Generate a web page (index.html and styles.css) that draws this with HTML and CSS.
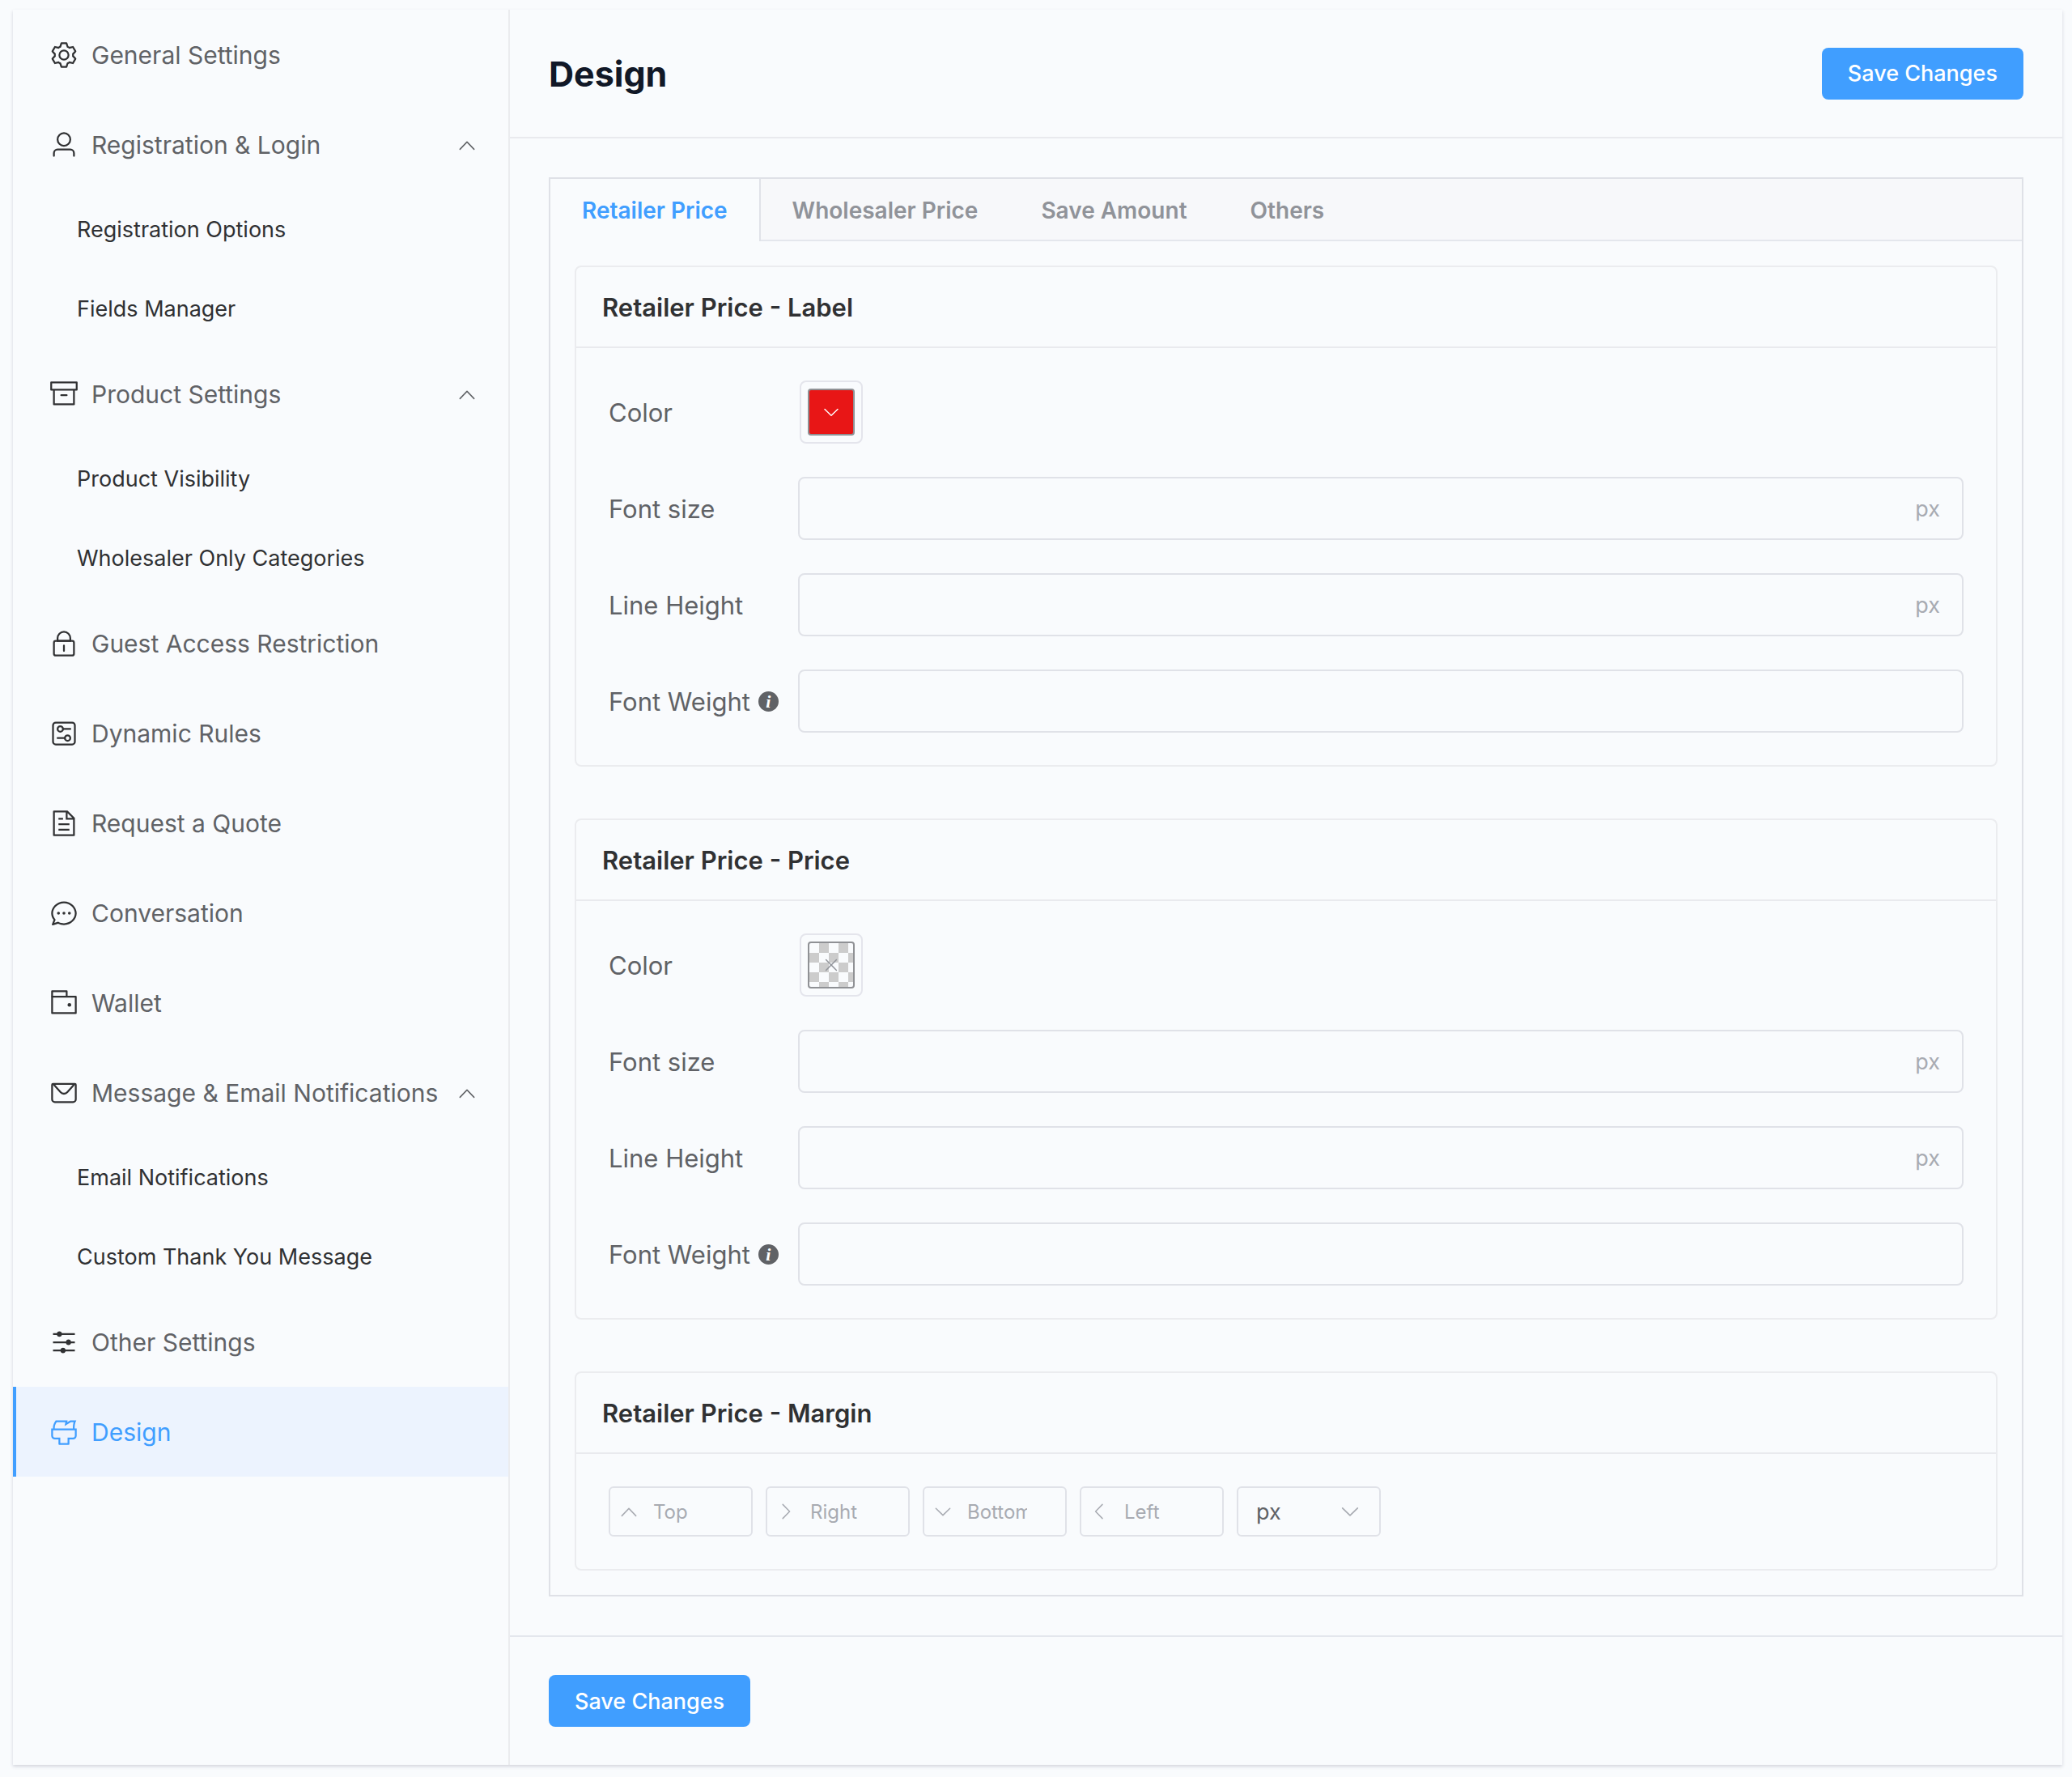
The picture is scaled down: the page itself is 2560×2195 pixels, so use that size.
FILE: index.html
```html
<!DOCTYPE html>
<html lang="en">
<head>
    <meta charset="UTF-8">
    <meta name="viewport" content="width=device-width, initial-scale=1.0">
    <title>Design</title>

    <link rel="stylesheet" href="styles.css">
</head>
<body>

    <!-- shared icons -->
    <svg class="sprite" aria-hidden="true">
        <symbol id="arrow-up" viewBox="0 0 1024 1024"><path d="m488.832 344.32-339.84 356.672a32 32 0 0 0 0 44.16l.384.384a29.44 29.44 0 0 0 42.688 0l320-335.872 319.872 335.872a29.44 29.44 0 0 0 42.688 0l.384-.384a32 32 0 0 0 0-44.16L535.168 344.32a32 32 0 0 0-46.336 0z"/></symbol>
        <symbol id="arrow-down" viewBox="0 0 1024 1024"><path d="M831.872 340.864 512 652.672 192.128 340.864a30.592 30.592 0 0 0-42.752 0 29.12 29.12 0 0 0 0 41.6L489.664 714.24a32 32 0 0 0 44.672 0l340.288-331.712a29.12 29.12 0 0 0 0-41.728 30.592 30.592 0 0 0-42.752 0z"/></symbol>
        <symbol id="arrow-right" viewBox="0 0 1024 1024"><path d="M340.864 149.312a30.592 30.592 0 0 0 0 42.752L652.736 512 340.864 831.872a30.592 30.592 0 0 0 0 42.752 29.12 29.12 0 0 0 41.728 0L714.24 534.336a32 32 0 0 0 0-44.672L382.592 149.376a29.12 29.12 0 0 0-41.728 0z"/></symbol>
        <symbol id="arrow-left" viewBox="0 0 1024 1024"><path d="M609.408 149.376 277.76 489.6a32 32 0 0 0 0 44.672l331.648 340.352a29.12 29.12 0 0 0 41.728 0 30.592 30.592 0 0 0 0-42.752L339.264 511.936l311.872-319.872a30.592 30.592 0 0 0 0-42.688 29.12 29.12 0 0 0-41.728 0z"/></symbol>
        <symbol id="close" viewBox="0 0 1024 1024"><path d="M764.288 214.592 512 466.88 259.712 214.592a31.936 31.936 0 0 0-45.12 45.12L466.752 512 214.528 764.224a31.936 31.936 0 1 0 45.12 45.184L512 557.184l252.288 252.288a31.936 31.936 0 0 0 45.12-45.12L557.12 512.064l252.288-252.352a31.936 31.936 0 1 0-45.12-45.184z"/></symbol>
    </svg>

    <div class="panel">
        <nav class="sidebar">
            <a class="item" href="#general">
                <svg class="icon" viewBox="0 0 1024 1024"><path d="M600.704 64a32 32 0 0 1 30.464 22.208l35.2 109.376c14.784 7.232 28.928 15.36 42.432 24.512l112.384-24.192a32 32 0 0 1 34.432 15.36L944.32 364.8a32 32 0 0 1-4.032 37.504l-77.12 85.12a357.12 357.12 0 0 1 0 49.024l77.12 85.248a32 32 0 0 1 4.032 37.504l-88.704 153.6a32 32 0 0 1-34.432 15.296L708.8 803.904c-13.44 9.088-27.648 17.28-42.368 24.512l-35.264 109.376A32 32 0 0 1 600.704 960H423.296a32 32 0 0 1-30.464-22.208L357.696 828.48a351.616 351.616 0 0 1-42.56-24.64l-112.32 24.256a32 32 0 0 1-34.432-15.36L79.68 659.2a32 32 0 0 1 4.032-37.504l77.12-85.248a357.12 357.12 0 0 1 0-48.896l-77.12-85.248A32 32 0 0 1 79.68 364.8l88.704-153.6a32 32 0 0 1 34.432-15.296l112.32 24.256c13.568-9.152 27.776-17.408 42.56-24.64l35.2-109.312A32 32 0 0 1 423.232 64H600.64zm-23.424 64H446.72l-36.352 113.088-24.512 11.968a294.113 294.113 0 0 0-34.816 20.096l-22.656 15.36-116.224-25.088-65.28 113.152 79.68 88.192-1.92 27.136a293.12 293.12 0 0 0 0 40.192l1.92 27.136-79.808 88.192 65.344 113.152 116.224-25.024 22.656 15.296a294.113 294.113 0 0 0 34.816 20.096l24.512 11.968L446.72 896h130.688l36.48-113.152 24.448-11.904a288.282 288.282 0 0 0 34.752-20.096l22.592-15.296 116.288 25.024 65.28-113.152-79.744-88.192 1.92-27.136a293.12 293.12 0 0 0 0-40.256l-1.92-27.136 79.808-88.128-65.344-113.152-116.288 24.96-22.592-15.232a287.616 287.616 0 0 0-34.752-20.096l-24.448-11.904L577.344 128zM512 320a192 192 0 1 1 0 384 192 192 0 0 1 0-384m0 64a128 128 0 1 0 0 256 128 128 0 0 0 0-256"/></svg>
                <span>General Settings</span>
            </a>
            <button class="item" type="button" aria-expanded="true">
                <svg class="icon" viewBox="0 0 1024 1024"><path d="M512 512a192 192 0 1 0 0-384 192 192 0 0 0 0 384m0 64a256 256 0 1 1 0-512 256 256 0 0 1 0 512m320 320v-96a96 96 0 0 0-96-96H288a96 96 0 0 0-96 96v96a32 32 0 1 1-64 0v-96a160 160 0 0 1 160-160h448a160 160 0 0 1 160 160v96a32 32 0 1 1-64 0"/></svg>
                <span>Registration &amp; Login</span>
                <svg class="arrow"><use href="#arrow-up"/></svg>
            </button>
            <div class="submenu">
                <a href="#registration-options">Registration Options</a>
                <a href="#fields-manager">Fields Manager</a>
            </div>
            <button class="item" type="button" aria-expanded="true">
                <svg class="icon" viewBox="0 0 1024 1024"><path d="M832 384H192v448h640zM96 320h832V128H96zm800 64v480a32 32 0 0 1-32 32H160a32 32 0 0 1-32-32V384H64a32 32 0 0 1-32-32V96a32 32 0 0 1 32-32h896a32 32 0 0 1 32 32v256a32 32 0 0 1-32 32zM416 512h192a32 32 0 0 1 0 64H416a32 32 0 0 1 0-64"/></svg>
                <span>Product Settings</span>
                <svg class="arrow"><use href="#arrow-up"/></svg>
            </button>
            <div class="submenu">
                <a href="#product-visibility">Product Visibility</a>
                <a href="#wholesaler-categories">Wholesaler Only Categories</a>
            </div>
            <a class="item" href="#guest">
                <svg class="icon" viewBox="0 0 1024 1024"><path d="M224 448a32 32 0 0 0-32 32v384a32 32 0 0 0 32 32h576a32 32 0 0 0 32-32V480a32 32 0 0 0-32-32zm0-64h576a96 96 0 0 1 96 96v384a96 96 0 0 1-96 96H224a96 96 0 0 1-96-96V480a96 96 0 0 1 96-96"/><path d="M512 544a32 32 0 0 1 32 32v192a32 32 0 1 1-64 0V576a32 32 0 0 1 32-32m192-160v-64a192 192 0 1 0-384 0v64zM512 64a256 256 0 0 1 256 256v128H256V320A256 256 0 0 1 512 64"/></svg>
                <span>Guest Access Restriction</span>
            </a>
            <a class="item" href="#rules">
                <svg class="icon" viewBox="0 0 1024 1024"><path d="M224 160a64 64 0 0 0-64 64v576a64 64 0 0 0 64 64h576a64 64 0 0 0 64-64V224a64 64 0 0 0-64-64zm0-64h576a128 128 0 0 1 128 128v576a128 128 0 0 1-128 128H224A128 128 0 0 1 96 800V224A128 128 0 0 1 224 96"/><path d="M384 416a64 64 0 1 0 0-128 64 64 0 0 0 0 128m0 64a128 128 0 1 1 0-256 128 128 0 0 1 0 256"/><path d="M480 320h256q32 0 32 32t-32 32H480q-32 0-32-32t32-32m160 416a64 64 0 1 0 0-128 64 64 0 0 0 0 128m0 64a128 128 0 1 1 0-256 128 128 0 0 1 0 256"/><path d="M288 640h256q32 0 32 32t-32 32H288q-32 0-32-32t32-32"/></svg>
                <span>Dynamic Rules</span>
            </a>
            <a class="item" href="#quote">
                <svg class="icon" viewBox="0 0 1024 1024"><path d="M832 384H576V128H192v768h640zm-26.496-64L640 154.496V320zM160 64h480l256 256v608a32 32 0 0 1-32 32H160a32 32 0 0 1-32-32V96a32 32 0 0 1 32-32m160 448h384v64H320zm0-192h160v64H320zm0 384h384v64H320z"/></svg>
                <span>Request a Quote</span>
            </a>
            <a class="item" href="#conversation">
                <svg class="icon" viewBox="0 0 1024 1024"><path d="m174.72 855.68 135.296-45.12 23.68 11.84C388.096 849.536 448.576 864 512 864c211.84 0 384-166.784 384-352S723.84 160 512 160 128 326.784 128 512c0 69.12 24.96 139.264 70.848 199.232l22.08 28.8-46.272 115.584zm-45.248 82.56A32 32 0 0 1 89.6 896l58.368-145.92C94.72 680.32 64 596.864 64 512 64 299.904 256 96 512 96s448 203.904 448 416-192 416-448 416a461.06 461.06 0 0 1-206.912-48.384l-175.616 58.56z"/><path d="M512 563.2a51.2 51.2 0 1 1 0-102.4 51.2 51.2 0 0 1 0 102.4m192 0a51.2 51.2 0 1 1 0-102.4 51.2 51.2 0 0 1 0 102.4m-384 0a51.2 51.2 0 1 1 0-102.4 51.2 51.2 0 0 1 0 102.4"/></svg>
                <span>Conversation</span>
            </a>
            <a class="item" href="#wallet">
                <svg class="icon" viewBox="0 0 1024 1024"><path d="M640 288h-64V128H128v160H64V96a32 32 0 0 1 32-32h512a32 32 0 0 1 32 32z"/><path d="M128 320v512h768V320zm-32-64h832a32 32 0 0 1 32 32v576a32 32 0 0 1-32 32H96a32 32 0 0 1-32-32V288a32 32 0 0 1 32-32"/><path d="M704 640a64 64 0 1 1 0-128 64 64 0 0 1 0 128"/></svg>
                <span>Wallet</span>
            </a>
            <button class="item" type="button" aria-expanded="true">
                <svg class="icon" viewBox="0 0 1024 1024"><path d="M128 224v512a64 64 0 0 0 64 64h640a64 64 0 0 0 64-64V224zm0-64h768a64 64 0 0 1 64 64v512a128 128 0 0 1-128 128H192A128 128 0 0 1 64 736V224a64 64 0 0 1 64-64"/><path d="M904 224 656.512 506.88a192 192 0 0 1-289.024 0L120 224zm-698.944 0 210.56 240.704a128 128 0 0 0 192.704 0L818.944 224z"/></svg>
                <span>Message &amp; Email Notifications</span>
                <svg class="arrow"><use href="#arrow-up"/></svg>
            </button>
            <div class="submenu">
                <a href="#email">Email Notifications</a>
                <a href="#thank-you">Custom Thank You Message</a>
            </div>
            <a class="item" href="#other">
                <svg class="icon" viewBox="0 0 1024 1024"><path d="M389.44 768a96.064 96.064 0 0 1 181.12 0H896v64H570.56a96.064 96.064 0 0 1-181.12 0H128v-64zm192-288a96.064 96.064 0 0 1 181.12 0H896v64H762.56a96.064 96.064 0 0 1-181.12 0H128v-64zm-320-288a96.064 96.064 0 0 1 181.12 0H896v64H442.56a96.064 96.064 0 0 1-181.12 0H128v-64z"/></svg>
                <span>Other Settings</span>
            </a>
            <a class="item active" href="#design" aria-current="page">
                <svg class="icon" viewBox="0 0 1024 1024"><path d="M896 448H128v192a64 64 0 0 0 64 64h192v192h256V704h192a64 64 0 0 0 64-64zm-770.752-64c0-47.552 5.248-90.24 15.552-128 14.72-54.016 42.496-107.392 83.2-160h417.28l-15.36 70.336L736 96h211.2c-24.832 42.88-41.92 96.256-51.2 160a663.872 663.872 0 0 0-6.144 128H960v256a128 128 0 0 1-128 128H704v160a32 32 0 0 1-32 32H352a32 32 0 0 1-32-32V768H192A128 128 0 0 1 64 640V384zm64 0h636.544c-2.048-45.824.256-91.584 6.848-137.216 4.48-30.848 10.688-59.776 18.688-86.784h-96.64l-221.12 141.248L561.92 160H256.512c-25.856 37.888-43.776 75.456-53.952 112.832-8.768 32.064-13.248 69.12-13.312 111.168z"/></svg>
                <span>Design</span>
            </a>
        </nav>

        <main class="content">
            <header class="top">
                <h1>Design</h1>
                <button class="save" type="submit" form="design">Save Changes</button>
            </header>

            <form class="tabs" id="design">
                <div class="tab-bar" role="tablist">
                    <button class="tab active" type="button" role="tab" aria-selected="true">Retailer Price</button>
                    <button class="tab" type="button" role="tab">Wholesaler Price</button>
                    <button class="tab" type="button" role="tab">Save Amount</button>
                    <button class="tab" type="button" role="tab">Others</button>
                </div>

                <div class="tab-body">
                    <section class="card">
                        <h2>Retailer Price - Label</h2>
                        <div class="card-body">
                            <div class="row">
                                <label for="label-color">Color</label>
                                <button class="color" type="button" id="label-color">
                                    <span class="swatch red"><svg><use href="#arrow-down"/></svg></span>
                                </button>
                            </div>
                            <div class="row">
                                <label for="label-size">Font size</label>
                                <div class="field"><input type="text" id="label-size"><span>px</span></div>
                            </div>
                            <div class="row">
                                <label for="label-height">Line Height</label>
                                <div class="field"><input type="text" id="label-height"><span>px</span></div>
                            </div>
                            <div class="row">
                                <label for="label-weight">Font Weight <span class="info">i</span></label>
                                <div class="field"><input type="text" id="label-weight"></div>
                            </div>
                        </div>
                    </section>

                    <section class="card">
                        <h2>Retailer Price - Price</h2>
                        <div class="card-body">
                            <div class="row">
                                <label for="price-color">Color</label>
                                <button class="color" type="button" id="price-color">
                                    <span class="swatch empty"><svg><use href="#close"/></svg></span>
                                </button>
                            </div>
                            <div class="row">
                                <label for="price-size">Font size</label>
                                <div class="field"><input type="text" id="price-size"><span>px</span></div>
                            </div>
                            <div class="row">
                                <label for="price-height">Line Height</label>
                                <div class="field"><input type="text" id="price-height"><span>px</span></div>
                            </div>
                            <div class="row">
                                <label for="price-weight">Font Weight <span class="info">i</span></label>
                                <div class="field"><input type="text" id="price-weight"></div>
                            </div>
                        </div>
                    </section>

                    <section class="card">
                        <h2>Retailer Price - Margin</h2>
                        <div class="card-body margins">
                            <label class="side"><svg><use href="#arrow-up"/></svg><input type="text" placeholder="Top" aria-label="Top"></label>
                            <label class="side"><svg><use href="#arrow-right"/></svg><input type="text" placeholder="Right" aria-label="Right"></label>
                            <label class="side"><svg><use href="#arrow-down"/></svg><input type="text" placeholder="Bottom" aria-label="Bottom"></label>
                            <label class="side"><svg><use href="#arrow-left"/></svg><input type="text" placeholder="Left" aria-label="Left"></label>
                            <div class="unit">
                                <select aria-label="Unit">
                                    <option>px</option>
                                </select>
                                <svg><use href="#arrow-down"/></svg>
                            </div>
                        </div>
                    </section>
                </div>
            </form>

            <footer class="bottom">
                <button class="save" type="submit" form="design">Save Changes</button>
            </footer>
        </main>
    </div>

</body>
</html>
```
FILE: styles.css
```css
* {
    box-sizing: border-box;
}
body {
    margin: 0;
    min-height: 100vh;
    padding: 12px 12px 15px 16px;
    display: flex;
    background-color: #f9fbfd;
    color: #303133;
    font-family: Inter, "Liberation Sans", sans-serif;
    font-size: 31px;
}
button, input, select {
    font: inherit;
    color: inherit;
    background: none;
    border: none;
    outline: none;
    margin: 0;
    padding: 0;
}
button {
    cursor: pointer;
}
a {
    color: inherit;
    text-decoration: none;
}
svg {
    fill: currentColor;
    flex-shrink: 0;
}
.sprite {
    display: none;
}
.panel {
    flex: 1;
    display: flex;
    background-color: #f9fbfd;
    box-shadow: 0 2px 4px rgba(60, 60, 90, 0.2);
}

/* sidebar */
.sidebar {
    width: 614px;
    flex-shrink: 0;
    border-right: 2px solid #ebecef;
}
.item {
    width: 100%;
    height: 111px;
    padding: 0 38px 0 45px;
    display: flex;
    align-items: center;
    gap: 16px;
    color: #606266;
    font-size: 30px;
    white-space: nowrap;
}
.item .icon {
    width: 36px;
    height: 36px;
    color: #303133;
}
.item .arrow {
    width: 26px;
    height: 26px;
    margin-left: auto;
}
.item.active {
    background-color: #ecf3fe;
    border-left: 4px solid #409eff;
    padding-left: 41px;
    color: #409eff;
}
.item.active .icon {
    color: #409eff;
}
.submenu {
    padding-bottom: 1px;
    font-size: 27px;
}
.submenu a {
    height: 98px;
    padding-left: 79px;
    display: flex;
    align-items: center;
}

/* page */
.content {
    flex: 1;
    min-width: 0;
}
.top {
    height: 159px;
    padding: 0 48px;
    display: flex;
    align-items: center;
    justify-content: space-between;
    border-bottom: 2px solid #e9eaee;
}
h1 {
    margin: 0;
    font-size: 43px;
    font-weight: 700;
    color: #111827;
}
.save {
    height: 64px;
    padding: 0 32px;
    border-radius: 8px;
    background-color: #409eff;
    color: white;
    font-size: 27px;
    font-weight: 500;
}
.bottom {
    display: flex;
    padding: 47px 48px;
    border-top: 2px solid #e4e7ed;
}

/* tabs */
.tabs {
    margin: 48px;
    border: 2px solid #dfe1e7;
}
.tab-bar {
    display: flex;
    height: 77px;
    background-color: #f7f8fa;
    border-bottom: 2px solid #e4e7ed;
}
.tab {
    height: 77px;
    padding: 0 39px;
    font-size: 28px;
    font-weight: 600;
    color: #909399;
}
.tab.active {
    background-color: #f9fbfd;
    border-right: 2px solid #e0e2e8;
    color: #409eff;
}
.tab-body {
    padding: 30px;
    display: flex;
    flex-direction: column;
    gap: 64px;
}

/* cards */
.card {
    border: 2px solid #ebecef;
    border-radius: 8px;
}
.card h2 {
    height: 100px;
    margin: 0;
    padding: 0 32px;
    display: flex;
    align-items: center;
    border-bottom: 2px solid #e9eaee;
    font-size: 31px;
    font-weight: 600;
}
.card-body {
    padding: 40px;
    display: flex;
    flex-direction: column;
    gap: 41px;
}
.row {
    display: flex;
    align-items: center;
}
.row label {
    width: 234px;
    flex-shrink: 0;
    display: flex;
    align-items: center;
    gap: 10px;
    color: #606266;
    white-space: nowrap;
}
.info {
    width: 25px;
    height: 25px;
    border-radius: 50%;
    background-color: #606266;
    color: white;
    font: italic bold 22px/25px "Liberation Serif", serif;
    text-align: center;
}
.field {
    flex: 1;
    height: 78px;
    padding: 0 27px;
    display: flex;
    align-items: center;
    border: 2px solid #e0e2e8;
    border-radius: 8px;
    font-size: 27px;
}
.field input {
    flex: 1;
    min-width: 0;
    height: 100%;
}
.field span {
    color: #a8abb2;
}

/* color picker */
.color {
    width: 78px;
    height: 78px;
    margin-left: 2px;
    padding: 8px;
    border: 2px solid #e4e5ec;
    border-radius: 8px;
}
.swatch {
    height: 100%;
    display: flex;
    align-items: center;
    justify-content: center;
    border: 2px solid #8f9195;
    border-radius: 4px;
}
.swatch svg {
    width: 24px;
    height: 24px;
}
.swatch.red {
    background-color: #e81616;
    color: white;
}
.swatch.empty {
    background-image: repeating-conic-gradient(#cccccc 0 25%, #f9fbfd 0 50%);
    background-size: 24px 24px;
    color: #909399;
}

/* margin inputs */
.card-body.margins {
    flex-direction: row;
    gap: 16px;
    font-size: 24px;
}
.side, .unit {
    width: 178px;
    height: 62px;
    display: flex;
    align-items: center;
    border: 2px solid #e0e2e8;
    border-radius: 6px;
}
.side {
    gap: 17px;
    padding: 0 47px 0 10px;
    color: #a8abb2;
}
.side svg {
    width: 26px;
    height: 26px;
}
.side input {
    flex: 1;
    min-width: 0;
}
.side input::placeholder {
    color: #a8abb2;
}
.unit {
    display: grid;
    align-items: center;
}
.unit select, .unit svg {
    grid-area: 1 / 1;
}
.unit select {
    appearance: none;
    height: 100%;
    padding-left: 22px;
    font-size: 27px;
    color: #606266;
}
.unit svg {
    width: 28px;
    height: 28px;
    margin-right: 22px;
    justify-self: end;
    color: #a8abb2;
    pointer-events: none;
}
```
